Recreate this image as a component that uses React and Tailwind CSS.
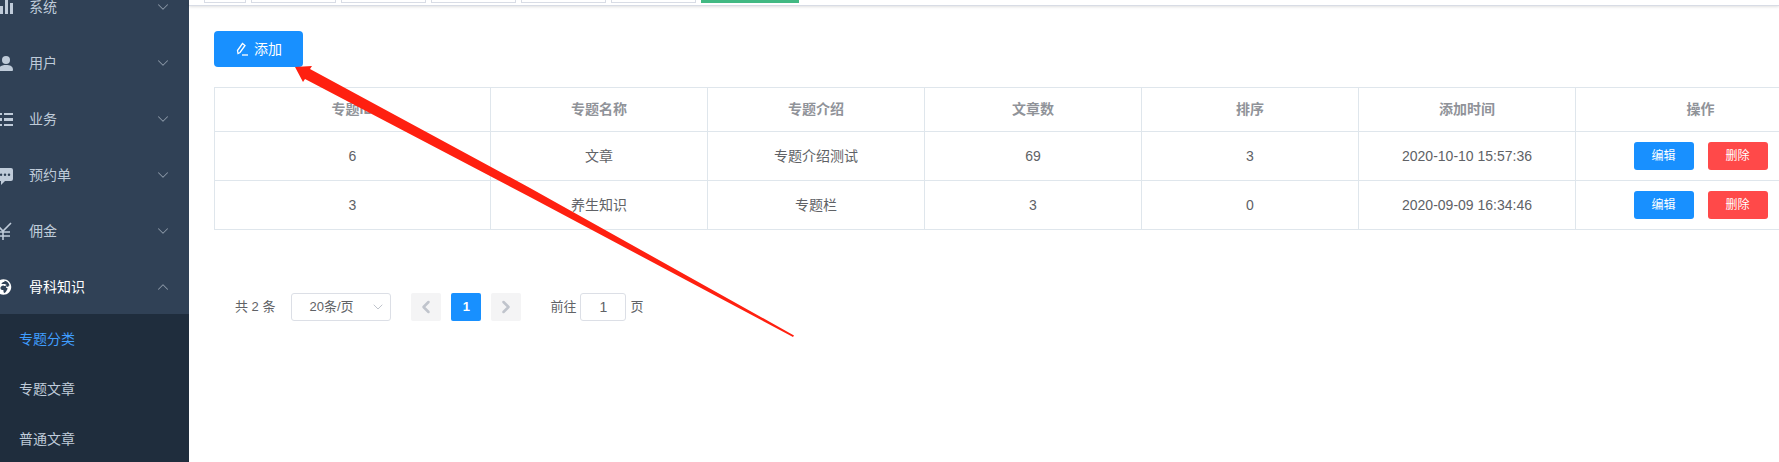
import { FaGlobeAfrica } from "react-icons/fa";
import { FiChevronDown, FiChevronUp, FiChevronLeft, FiChevronRight } from "react-icons/fi";

const font = "font-['Liberation_Sans','Noto_Sans_CJK_SC',sans-serif]";

// sidebar icons, drawn so the left part is cut by the sidebar edge like in the screenshot
const IconBars = () => (
  <svg width="19" height="19" viewBox="0 0 19 19" fill="currentColor" className="shrink-0">
    <rect x="6" y="8" width="3" height="8" />
    <rect x="11" y="1" width="3" height="15" />
    <rect x="16" y="5" width="3" height="11" />
  </svg>
);
const IconUser = () => (
  <svg width="19" height="19" viewBox="0 0 19 19" fill="currentColor" className="shrink-0">
    <circle cx="12" cy="6" r="4" />
    <path d="M5 16c0-4 3-5 7-5s7 1 7 5c0 1-1 1-2 1H7c-1 0-2 0-2-1z" />
  </svg>
);
const IconList = () => (
  <svg width="19" height="19" viewBox="0 0 19 19" fill="currentColor" className="shrink-0">
    <rect x="5" y="3" width="3" height="2" />
    <rect x="5" y="8" width="3" height="3" />
    <rect x="5" y="14" width="3" height="2" />
    <rect x="10" y="3" width="9" height="2" />
    <rect x="10" y="8" width="9" height="3" />
    <rect x="10" y="14" width="9" height="2" />
  </svg>
);
const IconComment = () => (
  <svg width="19" height="19" viewBox="0 0 19 19" fill="currentColor" className="shrink-0">
    <path fillRule="evenodd" d="M3 2h14a2 2 0 0 1 2 2v9a2 2 0 0 1-2 2h-6l-4 4v-4H3a2 2 0 0 1-2-2V4a2 2 0 0 1 2-2zM7 7.500a1 1 0 1 0 0 2.500a1 1 0 1 0 0-2.500zM11 7.500a1 1 0 1 0 0 2.500a1 1 0 1 0 0-2.500zM15 7.500a1 1 0 1 0 0 2.500a1 1 0 1 0 0-2.500z" />
  </svg>
);
const IconYen = () => (
  <svg width="19" height="19" viewBox="0 0 19 19" fill="none" stroke="currentColor" strokeWidth="1.600" className="shrink-0">
    <path d="M1 1l8 8 8-8M9 9v9M2 10h14M2 14h14" />
  </svg>
);

const menus = [
  { name: "系统", icon: IconBars },
  { name: "用户", icon: IconUser },
  { name: "业务", icon: IconList },
  { name: "预约单", icon: IconComment },
  { name: "佣金", icon: IconYen },
];

const rows = [
  { id: 6, name: "文章", intro: "专题介绍测试", count: 69, sort: 3, time: "2020-10-10 15:57:36" },
  { id: 3, name: "养生知识", intro: "专题栏", count: 3, sort: 0, time: "2020-09-09 16:34:46" },
];

const tabs = ["w-[42px]", "w-[85px]", "w-[85px]", "w-[85px]", "w-[85px]", "w-[85px]"];

function Sidebar() {
  return (
    <aside className="w-[189px] shrink-0 h-full overflow-hidden bg-[#304156] text-[14px] text-[#bfcbd9]">
      <div className="-mt-[21px] -mb-[1px]">
        {menus.map((m) => (
          <div key={m.name} className="h-[56px] flex items-center -ml-[6px] pr-[17px]">
            <m.icon />
            <span className="ml-[16px] flex-1">{m.name}</span>
            <FiChevronDown className="w-[18px] h-[18px] text-[#8a97a6]" strokeWidth={1.4} />
          </div>
        ))}
        <div className="h-[56px] flex items-center -ml-[6px] pr-[17px] text-white">
          <FaGlobeAfrica className="w-[19px] h-[16px] shrink-0" />
          <span className="ml-[16px] flex-1">骨科知识</span>
          <FiChevronUp className="w-[18px] h-[18px] text-[#8a97a6]" strokeWidth={1.4} />
        </div>
      </div>
      <div className="bg-[#1f2d3d] h-[200px] text-[14px]">
        <div className="h-[50px] flex items-center pl-[19px] text-[#409eff]">专题分类</div>
        <div className="h-[50px] flex items-center pl-[19px]">专题文章</div>
        <div className="h-[50px] flex items-center pl-[19px]">普通文章</div>
      </div>
    </aside>
  );
}

function TopTabs() {
  return (
    <div className="h-[6px] shrink-0 overflow-hidden flex gap-[5px] pl-[15px] border-b border-[#d8dce5] shadow-[0_1px_3px_rgba(0,0,0,0.12)]">
      {tabs.map((w, i) => (
        <div key={i} className={`${w} h-[3px] border-x border-b border-[#d8dce5] bg-white`}></div>
      ))}
      <div className="w-[98px] h-[3px] bg-[#42b983]"></div>
    </div>
  );
}

function Table() {
  const th = "border border-[#dfe6ec] font-bold text-[#909399] text-center";
  const td = "border border-[#dfe6ec] text-[#606266] text-center";
  return (
    <table className="mt-[20px] w-[1611px] table-fixed border-collapse text-[14px]">
      <thead>
        <tr className="h-[44px]">
          <th className={`${th} w-[276px]`}>专题ID</th>
          <th className={`${th} w-[217px]`}>专题名称</th>
          <th className={`${th} w-[217px]`}>专题介绍</th>
          <th className={`${th} w-[217px]`}>文章数</th>
          <th className={`${th} w-[217px]`}>排序</th>
          <th className={`${th} w-[217px]`}>添加时间</th>
          <th className={`${th} w-[250px]`}>操作</th>
        </tr>
      </thead>
      <tbody>
        {rows.map((r) => (
          <tr key={r.id} className="h-[49px]">
            <td className={td}>{r.id}</td>
            <td className={td}>{r.name}</td>
            <td className={td}>{r.intro}</td>
            <td className={td}>{r.count}</td>
            <td className={td}>{r.sort}</td>
            <td className={td}>{r.time}</td>
            <td className={td}>
              <div className="flex justify-center gap-[14px] text-[12px] text-white">
                <button className="w-[60px] h-[28px] rounded-[3px] bg-[#1890ff]">编辑</button>
                <button className="w-[60px] h-[28px] rounded-[3px] bg-[#ff4949]">删除</button>
              </div>
            </td>
          </tr>
        ))}
      </tbody>
    </table>
  );
}

function Pagination() {
  return (
    <div className="mt-[63px] ml-[21px] flex items-center h-[28px] text-[13px] text-[#606266]">
      <span>共 2 条</span>
      <div className="ml-[16px] w-[100px] h-[28px] rounded-[3px] border border-[#dcdfe6] flex items-center pl-[17px] pr-[4px]">
        <span className="flex-1">20条/页</span>
        <FiChevronDown className="w-[16px] h-[16px] text-[#c0c4cc]" strokeWidth={1.5} />
      </div>
      <button className="ml-[20px] w-[30px] h-[28px] rounded-[2px] bg-[#f4f4f5] flex items-center justify-center text-[#c0c4cc]">
        <FiChevronLeft className="w-[20px] h-[20px]" strokeWidth={3} />
      </button>
      <button className="ml-[10px] w-[30px] h-[28px] rounded-[2px] bg-[#1890ff] text-white font-bold">1</button>
      <button className="ml-[10px] w-[30px] h-[28px] rounded-[2px] bg-[#f4f4f5] flex items-center justify-center text-[#c0c4cc]">
        <FiChevronRight className="w-[20px] h-[20px]" strokeWidth={3} />
      </button>
      <span className="ml-[29px]">前往</span>
      <div className="ml-[4px] w-[46px] h-[28px] rounded-[3px] border border-[#dcdfe6] flex items-center justify-center text-[14px]">1</div>
      <span className="ml-[4px]">页</span>
    </div>
  );
}

export default function App() {
  return (
    <div className={`relative w-[1779px] h-[462px] overflow-hidden flex bg-white ${font}`}>
      <Sidebar />
      <main className="flex-1 min-w-0 flex flex-col">
        <TopTabs />
        <div className="pl-[25px] pt-[25px]">
          <button className="w-[89px] h-[36px] rounded-[4px] bg-[#1890ff] text-white text-[14px] flex items-center justify-center gap-[5px]">
            <svg width="14" height="14" viewBox="0 0 14 14" fill="none" stroke="currentColor" strokeWidth="1.300">
              <path d="M3 11.500L2.500 8.500 7.500 1.500 10 3.500 5 10.500z" />
              <path d="M7 13H13" />
            </svg>
            添加
          </button>
          <Table />
          <Pagination />
        </div>
      </main>
      {/* red annotation arrow over the page */}
      <svg className="absolute inset-0 pointer-events-none" width="1779" height="462">
        <polygon points="295,67 312,66 310,69 530,188 794,335.500 793,337 530,197 305,79 303,82" fill="#ff2010" />
      </svg>
    </div>
  );
}
